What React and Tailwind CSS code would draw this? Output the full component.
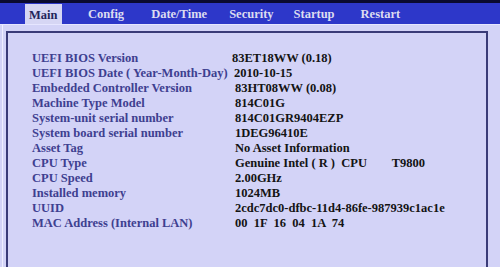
const tabs = ["Main", "Config", "Date/Time", "Security", "Startup", "Restart"];

const rows = [
  ["UEFI BIOS Version", "83ET18WW (0.18)"],
  ["UEFI BIOS Date ( Year-Month-Day)", "2010-10-15"],
  ["Embedded Controller Version", "83HT08WW (0.08)"],
  ["Machine Type Model", "814C01G"],
  ["System-unit serial number", "814C01GR9404EZP"],
  ["System board serial number", "1DEG96410E"],
  ["Asset Tag", "No Asset Information"],
  ["CPU Type", "Genuine Intel ( R )  CPU        T9800"],
  ["CPU Speed", "2.00GHz"],
  ["Installed memory", "1024MB"],
  ["UUID", "2cdc7dc0-dfbc-11d4-86fe-987939c1ac1e"],
  ["MAC Address (Internal LAN)", "00  1F  16  04  1A  74"],
];

// gap before each tab, measured off the screenshot
const tabGap = [0, 26, 27, 22, 20, 26];

export default function App() {
  return (
    <div
      className="w-[500px] h-[267px] overflow-hidden bg-[#d3d3f7] flex flex-col"
      style={{ fontFamily: '"Liberation Serif", "Times New Roman", serif' }}
    >
      <div className="h-[3px] bg-[#0a0a30]" />
      <div className="h-[22px] bg-[#2d37c9] flex items-stretch pl-[25px] border-b border-[#e6e6ff]">
        {tabs.map((t, i) => (
          <div
            key={t}
            className={
              i === 0
                ? "bg-[#d6d6f4] text-[#23245a] px-[4px] mt-[1px] pt-[2px] flex items-center text-[12.5px] font-bold w-[37px]"
                : "text-[#dcdcf0] flex items-center pt-[2px] text-[12.5px] font-bold"
            }
            style={i === 0 ? {} : { marginLeft: tabGap[i] }}
          >
            {t}
          </div>
        ))}
      </div>
      <div className="flex-1 pt-[6px] pl-[3px] pr-[12px] border-l border-[#eeeeff] ml-[2px]">
        <div className="h-full border-2 border-b-0 border-[#3a3b78] pl-[24px] pt-[18px]">
          {rows.map(([k, v], i) => (
            <div key={k} className="flex h-[15px] items-center text-[12.5px] font-bold leading-none">
              <div className="w-[200px] text-[#3e4090] whitespace-pre">{k}</div>
              <div className={"text-[#141414] whitespace-pre " + (i === 0 ? "" : i === 1 ? "ml-[2px]" : "ml-[3px]")}>{v}</div>
            </div>
          ))}
        </div>
      </div>
    </div>
  );
}
